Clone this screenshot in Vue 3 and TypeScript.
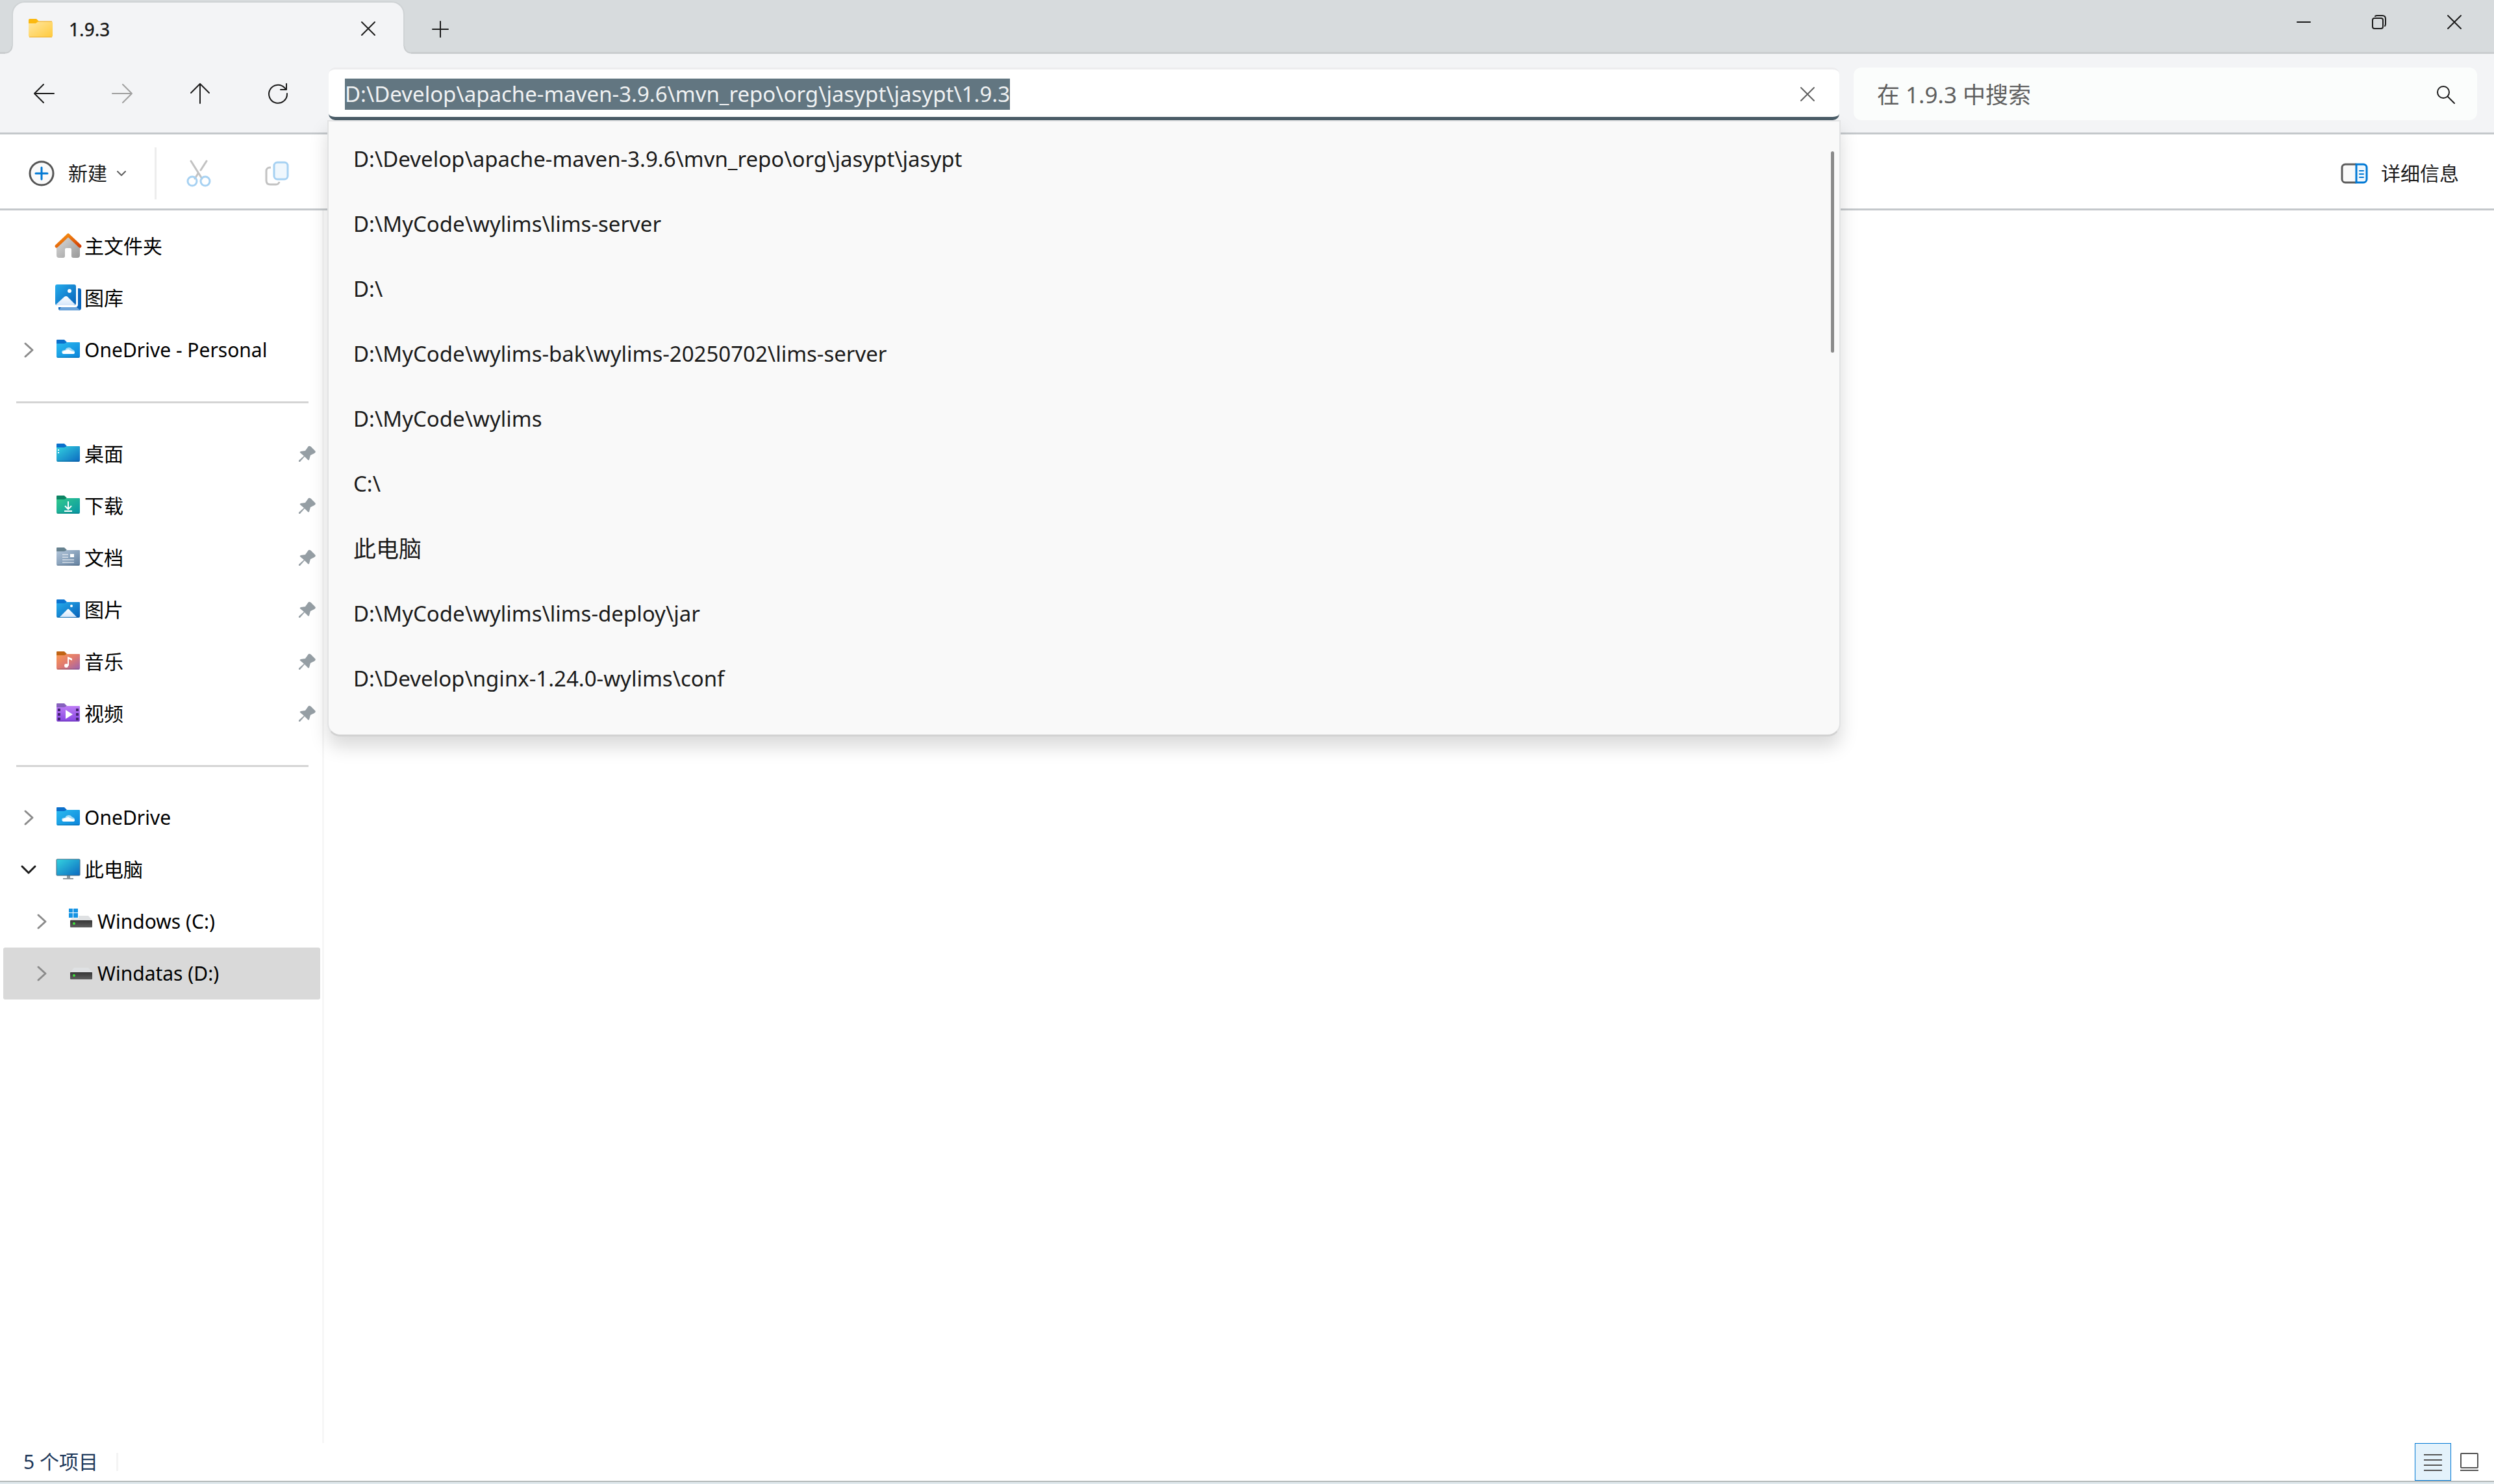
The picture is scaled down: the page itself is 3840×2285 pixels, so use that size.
<script setup lang="ts">
import { onMounted, ref } from 'vue'

type IconKind =
  | 'home' | 'gallery' | 'onedrive' | 'desktop' | 'download' | 'document'
  | 'picture' | 'music' | 'video' | 'computer' | 'system-drive' | 'drive'

interface NavItem {
  label: string
  icon: IconKind
  arrow?: 'right' | 'down'
  pinned?: boolean
  child?: boolean
  selected?: boolean
}

interface Suggestion {
  text: string
  lang: 'en' | 'zh'
}

const groups: NavItem[][] = [
  [
    { label: '主文件夹', icon: 'home' },
    { label: '图库', icon: 'gallery' },
    { label: 'OneDrive - Personal', icon: 'onedrive', arrow: 'right' },
  ],
  [
    { label: '桌面', icon: 'desktop', pinned: true },
    { label: '下载', icon: 'download', pinned: true },
    { label: '文档', icon: 'document', pinned: true },
    { label: '图片', icon: 'picture', pinned: true },
    { label: '音乐', icon: 'music', pinned: true },
    { label: '视频', icon: 'video', pinned: true },
  ],
  [
    { label: 'OneDrive', icon: 'onedrive', arrow: 'right' },
    { label: '此电脑', icon: 'computer', arrow: 'down' },
    { label: 'Windows (C:)', icon: 'system-drive', arrow: 'right', child: true },
    { label: 'Windatas (D:)', icon: 'drive', arrow: 'right', child: true, selected: true },
  ],
]

const suggestions: Suggestion[] = [
  { text: 'D:\\Develop\\apache-maven-3.9.6\\mvn_repo\\org\\jasypt\\jasypt', lang: 'en' },
  { text: 'D:\\MyCode\\wylims\\lims-server', lang: 'en' },
  { text: 'D:\\', lang: 'en' },
  { text: 'D:\\MyCode\\wylims-bak\\wylims-20250702\\lims-server', lang: 'en' },
  { text: 'D:\\MyCode\\wylims', lang: 'en' },
  { text: 'C:\\', lang: 'en' },
  { text: '此电脑', lang: 'zh' },
  { text: 'D:\\MyCode\\wylims\\lims-deploy\\jar', lang: 'en' },
  { text: 'D:\\Develop\\nginx-1.24.0-wylims\\conf', lang: 'en' },
]

const folderColours: Partial<Record<IconKind, { tab: string; body: string }>> = {
  onedrive: { tab: '#0a6fcb', body: 'url(#g-onedrive)' },
  desktop: { tab: '#0a6fcb', body: 'url(#g-desktop)' },
  download: { tab: '#0d8463', body: 'url(#g-download)' },
  document: { tab: '#66818f', body: 'url(#g-document)' },
  picture: { tab: '#0a74d1', body: 'url(#g-picture)' },
  music: { tab: '#c06414', body: 'url(#g-music)' },
  video: { tab: '#8660bd', body: 'url(#g-video)' },
}

const path = ref('D:\\Develop\\apache-maven-3.9.6\\mvn_repo\\org\\jasypt\\jasypt\\1.9.3')
const query = ref('')
const addressInput = ref<HTMLInputElement | null>(null)

onMounted(() => {
  addressInput.value?.focus()
  addressInput.value?.select()
})
</script>

<template>
  <div class="window">
    <svg class="defs" width="0" height="0" aria-hidden="true">
      <defs>
        <linearGradient id="g-folder" x1="0" y1="0" x2="1" y2="1"><stop offset="0" stop-color="#ffe7a2" /><stop offset="1" stop-color="#ffca3c" /></linearGradient>
        <linearGradient id="g-onedrive" x1="0" y1="0" x2="1" y2="1"><stop offset="0" stop-color="#2bbcf0" /><stop offset="1" stop-color="#0b84da" /></linearGradient>
        <linearGradient id="g-desktop" x1="0" y1="0" x2="1" y2="1"><stop offset="0" stop-color="#34d3e0" /><stop offset="1" stop-color="#0b69c0" /></linearGradient>
        <linearGradient id="g-download" x1="0" y1="0" x2="1" y2="1"><stop offset="0" stop-color="#33cb8c" /><stop offset="1" stop-color="#0795a5" /></linearGradient>
        <linearGradient id="g-document" x1="0" y1="0" x2="1" y2="1"><stop offset="0" stop-color="#b3c6da" /><stop offset="1" stop-color="#62809f" /></linearGradient>
        <linearGradient id="g-picture" x1="0" y1="0" x2="1" y2="1"><stop offset="0" stop-color="#26adec" /><stop offset="1" stop-color="#0760b8" /></linearGradient>
        <linearGradient id="g-music" x1="0" y1="0" x2="1" y2="1"><stop offset="0" stop-color="#fb9a52" /><stop offset="0.5" stop-color="#e07a70" /><stop offset="1" stop-color="#9a63b0" /></linearGradient>
        <linearGradient id="g-video" x1="0" y1="0" x2="0" y2="1"><stop offset="0" stop-color="#bd7df5" /><stop offset="1" stop-color="#8745e2" /></linearGradient>
        <linearGradient id="g-roof" x1="0" y1="0" x2="1" y2="1"><stop offset="0" stop-color="#fb9a14" /><stop offset="1" stop-color="#d23f06" /></linearGradient>
        <linearGradient id="g-house" x1="0" y1="0" x2="1" y2="1"><stop offset="0" stop-color="#dedede" /><stop offset="1" stop-color="#989898" /></linearGradient>
        <linearGradient id="g-hill" x1="0" y1="0" x2="0" y2="1"><stop offset="0" stop-color="#ffffff" /><stop offset="1" stop-color="#d5e6fa" /></linearGradient>
        <linearGradient id="g-drive" x1="0" y1="0" x2="0" y2="1"><stop offset="0" stop-color="#363636" /><stop offset="1" stop-color="#5e5e5e" /></linearGradient>
      </defs>
    </svg>

    <header class="tab-strip">
      <div class="tab">
        <svg class="tab-folder" width="40" height="32" viewBox="0 0 40 32">
          <path d="M1 3a2 2 0 0 1 2-2h10l4 4-4 5H1z" fill="#fbb910" />
          <path d="M1 8h11l4-3h20a2 2 0 0 1 2 2v20a2 2 0 0 1-2 2H3a2 2 0 0 1-2-2z" fill="url(#g-folder)" />
          <path d="M2 29h35" stroke="#eea91c" stroke-width="1" />
          <path d="M16 5h21" stroke="#eea91c" stroke-width="1" />
        </svg>
        <span class="tab-title">1.9.3</span>
        <button class="icon-button tab-close" aria-label="关闭标签页">
          <svg width="24" height="24" viewBox="0 0 24 24"><path d="M2 2l20 20M22 2L2 22" class="line" /></svg>
        </button>
      </div>
      <button class="icon-button tab-add" aria-label="新标签页">
        <svg width="26" height="26" viewBox="0 0 26 26"><path d="M13 1v24M1 13h24" class="line" /></svg>
      </button>
      <div class="caption-buttons">
        <button class="icon-button caption" aria-label="最小化">
          <svg width="24" height="24" viewBox="0 0 24 24"><path d="M2 12h20" class="line" /></svg>
        </button>
        <button class="icon-button caption" aria-label="还原">
          <svg width="24" height="24" viewBox="0 0 24 24">
            <rect x="2" y="6" width="16" height="16" rx="3" class="line" />
            <path d="M6 3q1-1 3-1h8q5 0 5 5v8q0 2-1 3" class="line" />
          </svg>
        </button>
        <button class="icon-button caption" aria-label="关闭">
          <svg width="24" height="24" viewBox="0 0 24 24"><path d="M2 2l20 20M22 2L2 22" class="line" /></svg>
        </button>
      </div>
    </header>

    <div class="nav-bar">
      <div class="nav-buttons">
        <button class="icon-button nav" aria-label="后退">
          <svg width="32" height="32" viewBox="0 0 32 32"><path d="M31 16H1M15 2L1 16l14 14" class="line" /></svg>
        </button>
        <button class="icon-button nav" aria-label="前进" disabled>
          <svg width="32" height="32" viewBox="0 0 32 32"><path d="M1 16h30M17 2l14 14-14 14" class="line faint" /></svg>
        </button>
        <button class="icon-button nav" aria-label="向上">
          <svg width="32" height="32" viewBox="0 0 32 32"><path d="M16 31V1M2 15L16 1l14 14" class="line" /></svg>
        </button>
        <button class="icon-button nav" aria-label="刷新">
          <svg width="32" height="32" viewBox="0 0 32 32"><path d="M30 16A14 14 0 1 1 26 7l3 3M29 1v9h-9" class="line" /></svg>
        </button>
      </div>

      <div class="address">
        <div class="address-box">
          <input ref="addressInput" v-model="path" class="address-input" type="text" aria-label="地址" spellcheck="false" />
          <button class="icon-button address-clear" aria-label="清除">
            <svg width="24" height="24" viewBox="0 0 24 24"><path d="M2 2l20 20M22 2L2 22" class="line grey" /></svg>
          </button>
        </div>
        <div class="suggestions">
          <ul class="suggestion-list">
            <li v-for="item in suggestions" :key="item.text" class="suggestion" :lang="item.lang">{{ item.text }}</li>
          </ul>
          <div class="scroll-thumb"></div>
        </div>
      </div>

      <div class="search-box">
        <input v-model="query" class="search-input" type="text" placeholder="在 1.9.3 中搜索" aria-label="搜索" />
        <button class="icon-button" aria-label="开始搜索">
          <svg width="30" height="30" viewBox="0 0 30 30"><circle cx="11" cy="11" r="9" class="line" /><path d="M18 18l10 10" class="line" /></svg>
        </button>
      </div>
    </div>

    <div class="command-bar">
      <button class="command new-button">
        <svg width="40" height="40" viewBox="0 0 40 40">
          <circle cx="20" cy="20" r="18" fill="#fafafa" stroke="#555" stroke-width="3" />
          <path d="M20 11v18M11 20h18" stroke="#0078d4" stroke-width="3" stroke-linecap="round" />
        </svg>
        <span>新建</span>
        <svg class="new-arrow" width="14" height="8" viewBox="0 0 14 8"><path d="M1 1l6 6 6-6" class="line grey" /></svg>
      </button>
      <div class="command-divider"></div>
      <button class="icon-button nav" aria-label="剪切" disabled>
        <svg width="40" height="44" viewBox="0 0 40 44">
          <path d="M8 3l17 27M32 3L23 17M19 22l-5 8" fill="none" stroke="#c2c2c2" stroke-width="3" stroke-linecap="round" />
          <circle cx="10" cy="34" r="7" fill="none" stroke="#a6d1f2" stroke-width="3" />
          <circle cx="30" cy="34" r="7" fill="none" stroke="#a6d1f2" stroke-width="3" />
        </svg>
      </button>
      <button class="icon-button nav" aria-label="复制" disabled>
        <svg width="40" height="40" viewBox="0 0 40 40">
          <path d="M11 11H9a5 5 0 0 0-5 5v15q0 6 6 6h9q4 0 5-4" fill="none" stroke="#c2c2c2" stroke-width="3" />
          <rect x="16" y="3" width="21" height="26" rx="5" fill="#eff7fd" stroke="#a6d1f2" stroke-width="3" />
        </svg>
      </button>
      <button class="command details-button">
        <svg width="42" height="32" viewBox="0 0 42 32">
          <path d="M24 2H7a5 5 0 0 0-5 5v18a5 5 0 0 0 5 5h17" fill="#fafafa" stroke="#5c5c5c" stroke-width="3" />
          <path d="M24 2h11a5 5 0 0 1 5 5v18a5 5 0 0 1-5 5H24z" fill="#eef7fd" stroke="#0078d4" stroke-width="3" />
          <path d="M29 12h6M29 17h6M29 22h6" stroke="#0078d4" stroke-width="2" stroke-linecap="round" />
        </svg>
        <span>详细信息</span>
      </button>
    </div>

    <div class="body">
      <nav class="sidebar" aria-label="导航窗格">
        <template v-for="(group, index) in groups" :key="index">
          <div v-if="index > 0" class="separator"><hr /></div>
          <ul class="nav-group">
            <li
              v-for="item in group"
              :key="item.label"
              class="nav-item"
              :class="{ child: item.child, selected: item.selected }"
            >
              <svg class="chevron" width="24" height="24" viewBox="0 0 24 24">
                <path v-if="item.arrow === 'right'" d="M7 2l11 10L7 22" fill="none" stroke="#8b8b8b" stroke-width="3" stroke-linecap="round" stroke-linejoin="round" />
                <path v-else-if="item.arrow === 'down'" d="M2 7l10 10L22 7" fill="none" stroke="#1b1b1b" stroke-width="3" stroke-linecap="round" stroke-linejoin="round" />
              </svg>
              <svg class="item-icon" width="40" height="40" viewBox="0 0 40 40">
                <template v-if="item.icon === 'home'">
                  <path d="M2 18L20 3l18 15v16a4 4 0 0 1-4 4h-6a3 3 0 0 1-3-3V25a2 2 0 0 0-2-2h-6a2 2 0 0 0-2 2v10a3 3 0 0 1-3 3H6a4 4 0 0 1-4-4z" fill="url(#g-house)" />
                  <path d="M2 20L20 3l18 17" fill="none" stroke="url(#g-roof)" stroke-width="5" stroke-linecap="round" stroke-linejoin="round" />
                </template>
                <template v-else-if="item.icon === 'gallery'">
                  <path d="M35 5h2a3 3 0 0 1 3 3v27a4 4 0 0 1-4 4H8a3 3 0 0 1-3-3v-2h26a4 4 0 0 0 4-4z" fill="#0a66bd" />
                  <path d="M9 34h24l5 4q-1 1-3 1H8q-2 0-2-1z" fill="#6ba3da" />
                  <rect x="0" y="-1" width="32" height="32" rx="3" fill="url(#g-picture)" />
                  <path d="M1 30l13-12q3-2 5 0l12 12q-1 1-3 1H3q-1 0-2-1z" fill="url(#g-hill)" />
                  <circle cx="22" cy="9" r="3" fill="#fff" />
                </template>
                <template v-else-if="item.icon === 'computer'">
                  <path d="M18 29h5v4h5v2H12v-2h6z" fill="#8d979d" />
                  <rect x="2" y="4" width="36" height="25" rx="1" fill="url(#g-desktop)" stroke="#426b83" stroke-width="1" />
                </template>
                <template v-else-if="item.icon === 'drive' || item.icon === 'system-drive'">
                  <path d="M3 18l6-7h22l6 7z" fill="#dfe1e3" />
                  <rect x="3" y="18" width="34" height="11" rx="1" fill="url(#g-drive)" />
                  <circle cx="9" cy="23" r="2" fill="#3fe03b" />
                  <template v-if="item.icon === 'system-drive'">
                    <rect x="0" y="-1" width="16" height="16" fill="#fff" />
                    <path d="M1 0h6v6H1zM8 0h7v6H8zM1 7h6v7H1zM8 7h7v7H8z" fill="#1593e3" />
                  </template>
                </template>
                <template v-else>
                  <path d="M2 5q0-1 1-1h11l4 4-3 3H2z" :fill="folderColours[item.icon]?.tab" />
                  <path d="M2 10h12l4-2h19q1 0 1 1v21q0 2-2 2H4q-2 0-2-2z" :fill="folderColours[item.icon]?.body" />
                  <path d="M3 31h34" stroke="#000" stroke-opacity="0.22" stroke-width="1" />
                  <template v-if="item.icon === 'onedrive'">
                    <path d="M15 21a6 6 0 0 1 11-2q4 1 4 4t-4 3H14q-4 0-4-3t5-3z" fill="#a4dcf6" />
                    <path d="M14 26q-3 0-3-2t3-3l6-2 6 3q4 0 4 2t-3 2z" fill="#fff" />
                  </template>
                  <path v-else-if="item.icon === 'desktop'" d="M4 13h2v2H4zM4 17h2v2H4z" fill="#fff" />
                  <path v-else-if="item.icon === 'download'" d="M20 13v12M15 20l5 5 5-5M14 28h12" fill="none" stroke="#fff" stroke-width="2" />
                  <template v-else-if="item.icon === 'document'">
                    <path d="M11 15h9M11 19h9M11 23h18M11 27h18" stroke="#fff" stroke-width="1" />
                    <rect x="23" y="14" width="6" height="5" fill="#fff" />
                  </template>
                  <template v-else-if="item.icon === 'picture'">
                    <path d="M7 31l12-12q1-1 2 0l12 12z" fill="url(#g-hill)" />
                    <circle cx="25" cy="14" r="2" fill="#fff" />
                  </template>
                  <template v-else-if="item.icon === 'music'">
                    <circle cx="17" cy="26" r="3" fill="#fff" />
                    <path d="M19 26V12l7 3v3l-5-2v10z" fill="#fff" />
                  </template>
                  <template v-else-if="item.icon === 'video'">
                    <path d="M16 14l11 7-11 7z" fill="#fff" />
                    <path d="M4 12h4v4H4zM4 19h4v4H4zM4 26h4v4H4zM32 12h4v4h-4zM32 19h4v4h-4zM32 26h4v4h-4z" fill="#43246f" />
                  </template>
                </template>
              </svg>
              <span class="item-label">{{ item.label }}</span>
              <svg v-if="item.pinned" class="pin" width="28" height="28" viewBox="0 0 28 28">
                <path d="M16 2q2-1 4 1l6 6q2 2-1 4l-6 3-2 7q-1 1-2 0l-5-5-7 8H1v-2l8-7-6-5q-1-1 1-2l7-1z" fill="#959ea4" />
              </svg>
            </li>
          </ul>
        </template>
      </nav>
      <main class="content"></main>
    </div>

    <footer class="status-bar">
      <span class="item-count">5 个项目</span>
      <button class="view-button active" aria-label="详细信息视图">
        <svg width="30" height="30" viewBox="0 0 30 30"><path d="M1 4h28M1 12h28M1 20h28M1 28h28" stroke="#555" stroke-width="2" /></svg>
      </button>
      <button class="view-button" aria-label="大图标视图">
        <svg width="30" height="30" viewBox="0 0 30 30">
          <rect x="2" y="2" width="26" height="22" rx="1" fill="#fff" stroke="#555" stroke-width="2" />
          <path d="M1 28h28" stroke="#555" stroke-width="2" />
        </svg>
      </button>
    </footer>
    <div class="window-edge"></div>
  </div>
</template>

<style>
body {
  margin: 0;
  background: #fff;
}
</style>

<style scoped>
.window {
  display: flex;
  flex-direction: column;
  min-height: 100vh;
  background: #fff;
  color: #1b1b1b;
  font-family: "Noto Sans", "Noto Sans CJK SC", sans-serif;
  font-size: 30px;
  line-height: 40px;
}
.defs {
  display: block;
  flex: none;
}
svg {
  display: block;
  flex: none;
  overflow: visible;
}
.line {
  fill: none;
  stroke: #1b1b1b;
  stroke-width: 2;
  stroke-linecap: round;
  stroke-linejoin: round;
}
.line.faint {
  stroke: #a0a0a0;
}
.line.grey {
  stroke: #5f5f5f;
}
button,
input {
  margin: 0;
  padding: 0;
  border: 0;
  background: none;
  color: inherit;
  font: inherit;
}
ul {
  margin: 0;
  padding: 0;
  list-style: none;
}
.icon-button {
  display: flex;
  align-items: center;
  justify-content: center;
  flex: none;
}

/* Tab strip */
.tab-strip {
  display: flex;
  align-items: flex-end;
  box-sizing: border-box;
  height: 83px;
  padding: 0 3px 0 20px;
  background: linear-gradient(#d7dbdd 80px, #cacdcf 80px);
}
.tab {
  position: relative;
  display: flex;
  align-items: center;
  box-sizing: border-box;
  width: 601px;
  height: 79px;
  padding: 0 42px 0 23px;
  border-radius: 18px 18px 0 0;
  background: #f3f4f6;
  box-shadow: 0 0 0 2px #cfd3d5;
  clip-path: inset(-4px -12px 0 -12px);
}
.tab::before,
.tab::after {
  content: "";
  position: absolute;
  bottom: 0;
  width: 12px;
  height: 12px;
}
.tab::before {
  right: 100%;
  background: radial-gradient(circle at 0 0, #d7dbdd 9px, #cacdcf 10px, #cacdcf 11px, #f3f4f6 12px);
}
.tab::after {
  left: 100%;
  background: radial-gradient(circle at 100% 0, #d7dbdd 9px, #cacdcf 10px, #cacdcf 11px, #f3f4f6 12px);
}
.tab-title {
  flex: 1;
  padding-top: 3px;
  margin-left: 23px;
  font-size: 28px;
  font-weight: 500;
}
.tab-add {
  width: 60px;
  height: 76px;
  margin-left: 27px;
}
.caption-buttons {
  display: flex;
  align-self: flex-start;
  margin-left: auto;
}
.caption {
  width: 116px;
  height: 68px;
}

/* Navigation bar */
.nav-bar {
  display: flex;
  align-items: flex-start;
  box-sizing: border-box;
  height: 124px;
  padding: 21px 26px 0 8px;
  border-bottom: 3px solid #c4c8cb;
  background: #f3f4f6;
}
.nav-buttons {
  display: flex;
  width: 498px;
}
.nav {
  width: 120px;
  height: 80px;
}
.address {
  position: relative;
  z-index: 2;
  flex: 1;
  min-width: 0;
}
.address-box {
  display: flex;
  align-items: center;
  box-sizing: border-box;
  height: 81px;
  padding: 3px 37px 0 25px;
  border-top: 3px solid #ececee;
  border-bottom: 5px solid #4b5d68;
  border-radius: 10px;
  background: #fff;
}
.address-input {
  flex: 1;
  min-width: 0;
  height: 48px;
  outline: none;
  font-size: 33px;
  line-height: 48px;
}
.address-input::selection {
  background: rgba(96, 116, 127, 0.99);
  color: #f0f2f3;
}
.suggestions {
  position: absolute;
  top: 81px;
  left: -2px;
  right: -2px;
  padding: 8px 0 36px;
  border: 2px solid #e2e3e4;
  border-bottom: 3px solid #d2d2d2;
  border-radius: 0 0 20px 20px;
  background: #f9f9f9;
  box-shadow: 0 16px 28px rgba(0, 0, 0, 0.15);
}
.suggestion {
  padding-left: 38px;
  font-size: 33px;
  line-height: 100px;
  white-space: nowrap;
}
.suggestion:lang(zh) {
  font-size: 35px;
}
.scroll-thumb {
  position: absolute;
  top: 46px;
  right: 8px;
  width: 5px;
  height: 310px;
  border-radius: 3px;
  background: #8a8a8a;
}
.search-box {
  display: flex;
  align-items: center;
  box-sizing: border-box;
  width: 25vw;
  height: 81px;
  margin-left: 22px;
  padding: 2px 33px 0 36px;
  border-radius: 12px;
  background: #fbfdfc;
}
.search-input {
  flex: 1;
  min-width: 0;
  outline: none;
  font-size: 35px;
}
.search-input::placeholder {
  color: #5f5f5f;
  opacity: 1;
}

/* Command bar */
.command-bar {
  display: flex;
  align-items: center;
  box-sizing: border-box;
  height: 117px;
  padding: 6px 54px 0 44px;
  border-bottom: 3px solid #c4c8cb;
  background: #fff;
}
.command {
  display: flex;
  align-items: center;
  height: 80px;
}
.new-button {
  width: 194px;
}
.new-button span {
  margin: 0 15px 0 21px;
}
.command-divider {
  width: 3px;
  height: 80px;
  margin-right: 5px;
  background: #ededed;
}
.details-button {
  gap: 20px;
  margin-left: auto;
}

/* Body */
.body {
  display: flex;
  flex: 1;
}
.sidebar {
  box-sizing: border-box;
  width: 499px;
  padding: 15px 3px 0 5px;
  border-right: 3px solid #f6f6f6;
  color: #000;
}
.content {
  flex: 1;
}
.nav-item {
  display: flex;
  align-items: center;
  height: 80px;
  padding: 0 6px 0 27px;
  border-radius: 3px;
}
.nav-item.child {
  padding-left: 47px;
}
.nav-item.selected {
  background: #d9d9d9;
}
.item-icon {
  margin: 0 5px 0 29px;
}
.item-label {
  flex: 1;
  white-space: nowrap;
}
.separator {
  display: flex;
  align-items: center;
  height: 80px;
  padding: 0 18px 0 20px;
}
.separator hr {
  flex: 1;
  height: 3px;
  margin: 0;
  border: 0;
  background: #d4d4d4;
}

/* Status bar */
.status-bar {
  display: flex;
  align-items: center;
  height: 58px;
  padding: 0 10px 0 36px;
  color: #1e395b;
}
.item-count {
  margin-right: auto;
  padding-right: 28px;
  border-right: 3px solid #f4f4f4;
  line-height: 28px;
}
.view-button {
  display: flex;
  align-items: center;
  justify-content: center;
  box-sizing: border-box;
  width: 56px;
  height: 58px;
}
.view-button.active {
  border: 1px solid #0078d4;
  background: #e4f2fb;
}
.window-edge {
  height: 3px;
  border-top: 2px solid #b4baba;
  background: #e0e9ed;
}
</style>
